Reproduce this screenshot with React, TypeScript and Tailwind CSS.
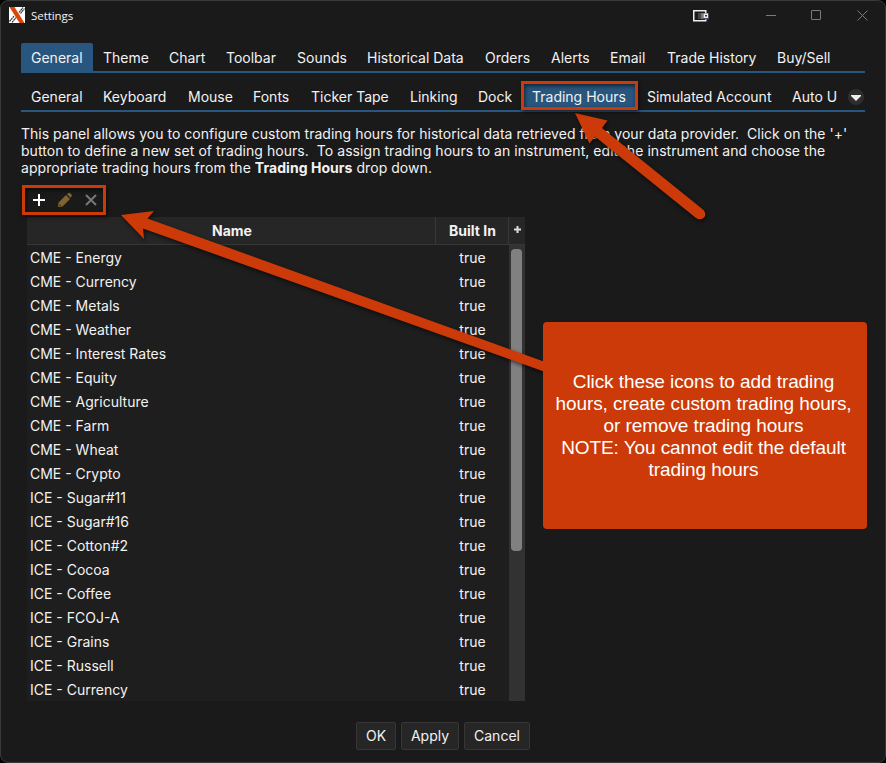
import { type ReactNode } from 'react'

const sections = [
  { label: 'General', width: 'w-[72px]' },
  { label: 'Theme', width: 'w-[66px]' },
  { label: 'Chart', width: 'w-[57px]' },
  { label: 'Toolbar', width: 'w-[71px]' },
  { label: 'Sounds', width: 'w-[70px]' },
  { label: 'Historical Data', width: 'w-[118px]' },
  { label: 'Orders', width: 'w-[66px]' },
  { label: 'Alerts', width: 'w-[59px]' },
  { label: 'Email', width: 'w-[57px]' },
  { label: 'Trade History', width: 'w-[110px]' },
  { label: 'Buy/Sell', width: 'w-[75px]' },
]

const panels = [
  { label: 'General', width: 'w-[72px]' },
  { label: 'Keyboard', width: 'w-[85px]' },
  { label: 'Mouse', width: 'w-[65px]' },
  { label: 'Fonts', width: 'w-[58px]' },
  { label: 'Ticker Tape', width: 'w-[99px]' },
  { label: 'Linking', width: 'w-[68px]' },
  { label: 'Dock', width: 'w-[54px]' },
  { label: 'Trading Hours', width: 'w-[115px]' },
  { label: 'Simulated Account', width: 'w-[145px]' },
  { label: 'Auto U', width: 'w-[66px]' },
]

const sessions = [
  'CME - Energy',
  'CME - Currency',
  'CME - Metals',
  'CME - Weather',
  'CME - Interest Rates',
  'CME - Equity',
  'CME - Agriculture',
  'CME - Farm',
  'CME - Wheat',
  'CME - Crypto',
  'ICE - Sugar#11',
  'ICE - Sugar#16',
  'ICE - Cotton#2',
  'ICE - Cocoa',
  'ICE - Coffee',
  'ICE - FCOJ-A',
  'ICE - Grains',
  'ICE - Russell',
  'ICE - Currency',
]

function TitleBar() {
  return (
    <header className="flex h-[30px] shrink-0 items-center pl-2 pr-[17px]">
      <svg className="-mt-[2px] h-4 w-4" viewBox="0 0 16 16" aria-hidden>
        <rect width="16" height="16" fill="#fff" />
        <path
          d="M10 5.500 14 0.500M11.500 6.500 15.500 1.500M0.500 14.500 5 9M3 15.500 7 10.500"
          stroke="#333"
          strokeWidth="1.2"
          strokeDasharray="2 0.5"
          fill="none"
        />
        <path d="M0.500 0h5L15.500 16h-5Z" fill="#dd4407" />
      </svg>
      <h1 className="ml-[6px] font-['Open_Sans','Noto_Sans',sans-serif] text-[11.5px] leading-4 tracking-[-0.05px]">
        Settings
      </h1>
      <div className="ml-auto flex items-center">
        <svg className="-mt-px mr-[56px] h-3 w-4" viewBox="0 0 16 12" aria-hidden>
          <rect x="0.75" y="0.75" width="12" height="10" fill="#1a1a1a" stroke="#eee" strokeWidth="1.5" />
          <rect x="5" y="3" width="3" height="6" fill="#45454a" />
          <rect x="8" y="3" width="3" height="6" fill="#77777f" />
          <rect x="10" y="3" width="6" height="6.500" fill="#4a4a62" />
          <rect x="10.500" y="3.500" width="4.500" height="4.500" fill="#eee" />
          <rect x="12" y="5" width="2" height="1.500" fill="#35354a" />
        </svg>
        <svg className="-mt-[2px] h-3 w-[103px]" viewBox="0 0 103 12" fill="none" stroke="#7b7b7b" aria-hidden>
          <path d="M1 6.500h10M92.500 1.500l10 10M102.500 1.500l-10 10" />
          <rect x="46.500" y="1.500" width="9" height="9" rx="0.5" />
        </svg>
      </div>
    </header>
  )
}

function Tab({ label, width, active }: { label: string; width: string; active?: boolean }) {
  return (
    <button
      className={`h-full shrink-0 whitespace-nowrap pl-[10px] pt-px text-left ${width} ${active ? 'rounded-t-[2px] bg-[#28567f]' : ''}`}
    >
      {label}
    </button>
  )
}

function HeaderCell({ children, className = '' }: { children?: ReactNode; className?: string }) {
  return (
    <div className={`flex h-7 items-center justify-center border-b border-[#373737] bg-[#262626] font-bold ${className}`}>
      {children}
    </div>
  )
}

function SessionTable() {
  return (
    <div className="ml-[6px] mt-1 flex h-[484px] w-[498px] shrink-0 flex-col bg-[#1e1e1e]">
      <div className="flex shrink-0">
        <HeaderCell className="w-[409px] border-r pl-[2px]">Name</HeaderCell>
        <HeaderCell className="w-[73px] border-r pl-px">Built In</HeaderCell>
        <HeaderCell className="w-4">
          <svg className="mb-[2px] h-[7px] w-[7px]" viewBox="0 0 7 7" aria-hidden>
            <path d="M3.500 0v7M0 3.500h7" stroke="#ddd" strokeWidth="2" />
          </svg>
        </HeaderCell>
      </div>
      <div className="flex min-h-0 grow">
        <div className="grow pt-px">
          {sessions.map((name) => (
            <div key={name} className="flex h-6 items-center pb-px">
              <span className="w-[409px] pl-[3px]">{name}</span>
              <span className="w-[73px] text-center">true</span>
            </div>
          ))}
        </div>
        <div className="w-4 bg-[#323232] px-[2px] pt-1">
          <div className="h-[302px] w-[11px] rounded-[4px] bg-[#808080]" />
        </div>
      </div>
    </div>
  )
}

function Callouts() {
  return (
    <>
      <svg
        className="pointer-events-none absolute inset-0 h-[763px] w-[886px] drop-shadow-[1px_2px_2px_rgba(0,0,0,0.6)]"
        viewBox="0 0 886 763"
        fill="#cb3a08"
        aria-hidden
      >
        <path d="M121 215 154 211 147.500 218.500 548 363V373L143 228.500 144 239Z" />
        <path d="M575 113 607.500 120.500 602 128 703.500 210Q706.500 213.500 704.500 217 701 221 696 218L595 136.500 589.500 143.500Z" />
      </svg>
      <div className="absolute left-[521px] top-[81px] h-[29px] w-[117px] border-3 border-[#cb3a08] shadow-[1px_2px_4px_rgba(0,0,0,0.6),inset_1px_2px_4px_rgba(0,0,0,0.6)]" />
      <div className="absolute left-[22px] top-[185px] h-[30px] w-[84px] border-3 border-[#cb3a08] shadow-[1px_2px_4px_rgba(0,0,0,0.6),inset_1px_2px_4px_rgba(0,0,0,0.6)]" />
      <div className="absolute left-[543px] top-[322px] flex h-[207px] w-[324px] items-center justify-center rounded-[4px] bg-[#cb3a08] pr-[3px] text-center font-['Liberation_Sans',Arial,sans-serif] text-[19px] leading-[22px] tracking-[-0.08px] text-white">
        <p className="whitespace-nowrap">
          Click these icons to add trading
          <br />
          hours, create custom trading hours,
          <br />
          or remove trading hours
          <br />
          NOTE: You cannot edit the default
          <br />
          trading hours
        </p>
      </div>
    </>
  )
}

export default function App() {
  return (
    <div className="relative h-[763px] w-[886px] overflow-hidden bg-black">
      <main className="flex h-full w-full flex-col overflow-hidden rounded-[8px] border border-[#393939] bg-[#1a1a1a] font-['Inter',sans-serif] text-[14px] leading-[17px] text-[#f2f2f2]">
        <TitleBar />
        <nav className="ml-5 mt-3 flex h-[30px] w-[844px] shrink-0 border-b-2 border-[#28567f]">
          {sections.map((tab) => (
            <Tab key={tab.label} {...tab} active={tab.label === 'General'} />
          ))}
        </nav>
        <nav className="ml-5 mt-[9px] flex h-[30px] w-[844px] shrink-0 items-center border-b-2 border-[#28567f]">
          {panels.map((tab) => (
            <Tab key={tab.label} {...tab} active={tab.label === 'Trading Hours'} />
          ))}
          <button className="mt-[2px] flex h-4 w-4 shrink-0 items-center justify-center rounded-full bg-[#2e2e2e]">
            <svg className="mt-[2px] h-[6px] w-[10px] shrink-0" viewBox="0 0 10 6" fill="#eee" aria-hidden>
              <path d="M0 0h10v1L5 6 0 1Z" />
            </svg>
          </button>
        </nav>
        <section className="ml-5 mt-[13px] flex grow flex-col">
          <div className="flex flex-col whitespace-pre leading-[17px]">
            <p className="tracking-[0.016px]">
              {"This panel allows you to configure custom trading hours for historical data retrieved from your data provider.  Click on the '+'"}
            </p>
            <p className="tracking-[0.05px]">
              {'button to define a new set of trading hours.  To assign trading hours to an instrument, edit the instrument and choose the'}
            </p>
            <p className="flex tracking-[0.05px]">
              <span>{'appropriate trading hours from the '}</span>
              <b>Trading Hours</b>
              <span>{' drop down.'}</span>
            </p>
          </div>
          <div className="mt-[10px] flex h-[27px] items-center gap-[10px] pl-[10px]">
            <svg className="h-4 w-4" viewBox="0 0 16 16" aria-hidden>
              <path d="M8 2v12M2 8h12" stroke="#fff" strokeWidth="2" />
            </svg>
            <svg className="h-4 w-4" viewBox="0 0 16 16" fill="#806330" aria-hidden>
              <path d="m1 15 .5-4.500L9 3l4 4-7.500 7.500ZM10 2.200 11.500 1Q12.500.500 13.500 1.500L14.500 2.500Q15.300 3.500 14.500 4.500L13.500 5.800Z" />
              <path d="m2.500 12 1.500 1.500-1.500.3Z" fill="#1a1a1a" />
            </svg>
            <svg className="h-4 w-4" viewBox="0 0 16 16" aria-hidden>
              <path d="m3 3 10 10M13 3 3 13" stroke="#777" strokeWidth="2" />
            </svg>
          </div>
          <SessionTable />
        </section>
        <footer className="mb-3 flex h-7 shrink-0 justify-center gap-[5px]">
          <button className="w-10 rounded-[2px] border border-[#363636] bg-[#262626] pb-px">OK</button>
          <button className="w-[58px] rounded-[2px] border border-[#363636] bg-[#262626] pb-px">Apply</button>
          <button className="w-[66px] rounded-[2px] border border-[#363636] bg-[#262626] pb-px">Cancel</button>
        </footer>
      </main>
      <Callouts />
    </div>
  )
}
